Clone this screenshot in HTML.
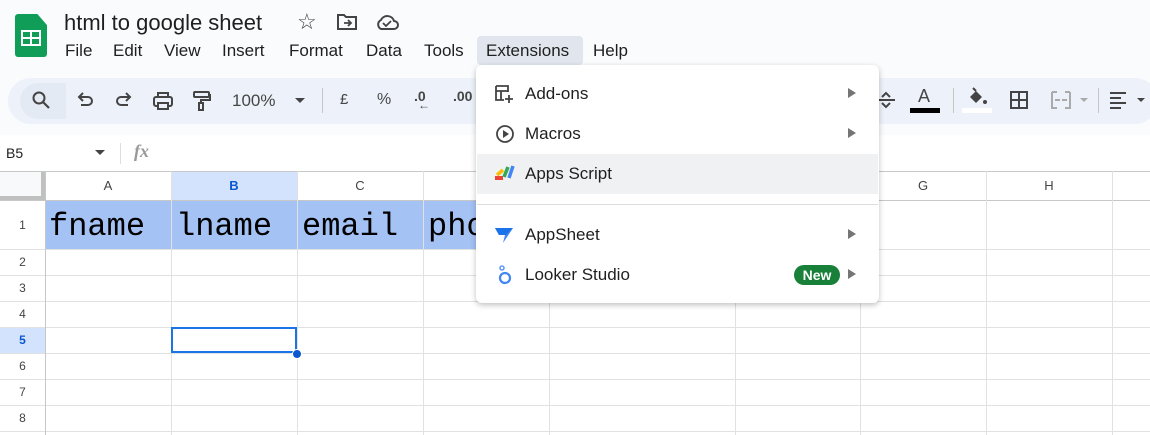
<!DOCTYPE html>
<html><head><meta charset="utf-8"><style>
*{margin:0;padding:0;box-sizing:border-box}
body{width:1150px;height:435px;overflow:hidden;background:#f9fbfd;font-family:"Liberation Sans",sans-serif;position:relative;color:#1f1f1f}
.a{position:absolute}
.menu span{position:absolute;top:41px;font-size:17px;color:#1f1f1f}
.tb{left:8px;top:78px;width:1150px;height:46px;background:#edf2fa;border-radius:24px}
.ic{position:absolute;color:#444746;font-size:17px}
.grid{left:0;top:171px;width:1150px;height:264px;background:#fff}
.vl{position:absolute;top:171px;width:1px;height:264px;background:#e1e1e1}
.hl{position:absolute;left:0;width:1150px;height:1px;background:#e1e1e1}
.ch{position:absolute;top:178px;font-size:13px;color:#444;text-align:center}
.rh{position:absolute;left:0;width:45px;text-align:center;font-size:12px;color:#444}
.mono{position:absolute;top:208px;font-family:"Liberation Mono",monospace;font-size:32px;color:#000}
.dd{left:476px;top:65px;width:403px;height:238px;background:#fff;border-radius:6px;box-shadow:0 2px 6px rgba(0,0,0,.25)}
.mi{position:absolute;left:525px;font-size:17px;color:#1f1f1f}
.arr{position:absolute;left:848px;width:0;height:0;border-top:5px solid transparent;border-bottom:5px solid transparent;border-left:8px solid #757575}
</style></head><body>
<div class="a" style="left:15px;top:14px;width:32px;height:43px;background:#0f9d58;border-radius:3px;clip-path:polygon(0 0,70% 0,100% 26%,100% 100%,0 100%)"></div>
<div class="a" style="left:21px;top:30px;width:20px;height:16px;border:2px solid #fff;background:#0f9d58"></div>
<div class="a" style="left:21px;top:37px;width:20px;height:2px;background:#fff"></div>
<div class="a" style="left:30px;top:30px;width:2px;height:16px;background:#fff"></div>
<div class="a" style="left:64px;top:10px;font-size:22px;color:#1f1f1f">html to google sheet</div>
<div class="a" style="left:297px;top:9px;font-size:22px;color:#444">☆</div>
<svg class="a" style="left:336px;top:13px" width="22" height="18" viewBox="0 0 22 18"><path d="M2 2h6l2 2h10v12H2z" fill="none" stroke="#444" stroke-width="2"/><path d="M8 10h7M12 7l3 3-3 3" stroke="#444" stroke-width="1.8" fill="none"/></svg>
<svg class="a" style="left:375px;top:13px" width="24" height="18" viewBox="0 0 24 18"><path d="M6 16h13a4 4 0 0 0 0-8 7 7 0 0 0-13-1A5 5 0 0 0 6 16z" fill="none" stroke="#444" stroke-width="2"/><path d="M8 10l3 3 5-5" stroke="#444" stroke-width="1.8" fill="none"/></svg>
<div class="menu">
<span style="left:65px">File</span><span style="left:113px">Edit</span><span style="left:164px">View</span><span style="left:222px">Insert</span><span style="left:289px">Format</span><span style="left:366px">Data</span><span style="left:424px">Tools</span>
<div class="a" style="left:477px;top:36px;width:106px;height:29px;background:#e1e6ee;border-radius:4px"></div>
<span style="left:486px">Extensions</span><span style="left:593px">Help</span>
</div>
<div class="a tb"></div>
<div class="a" style="left:20px;top:83px;width:46px;height:36px;background:#e4eaf4;border-radius:18px 0 0 18px"></div>
<svg class="a" style="left:31px;top:90px" width="20" height="20" viewBox="0 0 20 20"><circle cx="8" cy="8" r="5.5" fill="none" stroke="#444" stroke-width="2"/><path d="M12 12l6 6" stroke="#444" stroke-width="2.2"/></svg>
<svg class="a" style="left:75px;top:91px" width="20" height="20" viewBox="0 0 20 20"><path d="M5 6h8a4 4 0 0 1 0 8H6" fill="none" stroke="#444" stroke-width="2"/><path d="M8 2L4 6l4 4" fill="none" stroke="#444" stroke-width="2"/></svg>
<svg class="a" style="left:114px;top:91px" width="20" height="20" viewBox="0 0 20 20"><path d="M15 6H7a4 4 0 0 0 0 8h7" fill="none" stroke="#444" stroke-width="2"/><path d="M12 2l4 4-4 4" fill="none" stroke="#444" stroke-width="2"/></svg>
<svg class="a" style="left:152px;top:90px" width="22" height="22" viewBox="0 0 22 22"><rect x="2" y="7" width="18" height="9" rx="2" fill="none" stroke="#444" stroke-width="2"/><rect x="6" y="3" width="10" height="4" fill="none" stroke="#444" stroke-width="2"/><rect x="6" y="13" width="10" height="6" fill="#edf2fa" stroke="#444" stroke-width="2"/></svg>
<svg class="a" style="left:192px;top:90px" width="20" height="22" viewBox="0 0 20 22"><rect x="2" y="2" width="15" height="5" rx="1" fill="none" stroke="#444" stroke-width="2"/><path d="M17 5h1v5H9v3" fill="none" stroke="#444" stroke-width="2"/><rect x="7" y="13" width="4" height="7" fill="none" stroke="#444" stroke-width="2"/></svg>
<div class="ic" style="left:232px;top:91px">100%</div>
<div class="a" style="left:295px;top:98px;border-left:5px solid transparent;border-right:5px solid transparent;border-top:5px solid #444"></div>
<div class="a" style="left:322px;top:88px;width:1px;height:25px;background:#c7c7c7"></div>
<div class="ic" style="left:340px;top:91px;font-size:15px">£</div>
<div class="ic" style="left:377px;top:91px;font-size:16px">%</div>
<div class="ic" style="left:414px;top:88px;font-size:14px;font-weight:bold">.0<br><span style="position:relative;top:-8px;left:4px;font-size:12px">←</span></div>
<div class="ic" style="left:453px;top:88px;font-size:14px;font-weight:bold">.00</div>
<svg class="a" style="left:876px;top:90px" width="20" height="20" viewBox="0 0 20 20"><path d="M1 10h18" stroke="#444" stroke-width="2"/><path d="M6 7l4-4 4 4M6 13l4 4 4-4" fill="none" stroke="#444" stroke-width="2"/></svg>
<div class="ic" style="left:918px;top:86px;font-size:18px">A</div>
<div class="a" style="left:910px;top:108px;width:30px;height:5px;background:#000"></div>
<div class="a" style="left:953px;top:88px;width:1px;height:25px;background:#c7c7c7"></div>
<svg class="a" style="left:966px;top:87px" width="22" height="20" viewBox="0 0 22 20"><path d="M4 10l6-6 6 6-6 6z" fill="#444"/><path d="M7 1l3 3" stroke="#444" stroke-width="2"/><circle cx="19" cy="15" r="2" fill="#444"/></svg>
<div class="a" style="left:962px;top:108px;width:30px;height:5px;background:#fff"></div>
<svg class="a" style="left:1009px;top:90px" width="20" height="20" viewBox="0 0 20 20"><rect x="2" y="2" width="16" height="16" fill="none" stroke="#444" stroke-width="2"/><path d="M10 2v16M2 10h16" stroke="#444" stroke-width="2"/></svg>
<svg class="a" style="left:1050px;top:90px" width="22" height="20" viewBox="0 0 22 20"><path d="M2 2h5M2 2v16h5M20 2h-5M20 2v16h-5M5 10h5M17 10h-5" stroke="#aaa" stroke-width="2" fill="none"/></svg>
<div class="a" style="left:1080px;top:98px;border-left:4px solid transparent;border-right:4px solid transparent;border-top:4px solid #aaa"></div>
<div class="a" style="left:1098px;top:88px;width:1px;height:25px;background:#c7c7c7"></div>
<svg class="a" style="left:1108px;top:91px" width="20" height="18" viewBox="0 0 20 18"><path d="M2 2h16M2 7h11M2 12h16M2 17h11" stroke="#444" stroke-width="2"/></svg>
<div class="a" style="left:1137px;top:98px;border-left:4px solid transparent;border-right:4px solid transparent;border-top:4px solid #444"></div>
<div class="a" style="left:0;top:135px;width:1150px;height:36px;background:#fff"></div>
<div class="a" style="left:6px;top:145px;font-size:14px">B5</div>
<div class="a" style="left:95px;top:150px;border-left:5px solid transparent;border-right:5px solid transparent;border-top:5px solid #444"></div>
<div class="a" style="left:120px;top:143px;width:1px;height:21px;background:#ddd"></div>
<div class="a" style="left:134px;top:141px;font-size:18px;font-style:italic;color:#999;font-family:'Liberation Serif',serif;font-weight:bold">fx</div>
<div class="a grid"></div>
<div class="a" style="left:0;top:171px;width:45px;height:264px;background:#fff"></div>
<div class="a" style="left:0;top:171px;width:45px;height:29px;background:#f8f9fa;border-right:4px solid #c0c0c0;border-bottom:4px solid #c0c0c0"></div>
<div class="a" style="left:171px;top:171px;width:126px;height:29px;background:#d3e3fd"></div>
<div class="a" style="left:45px;top:200px;width:505px;height:49px;background:#a4c2f4"></div>
<div class="a" style="left:0;top:327px;width:45px;height:26px;background:#d3e3fd"></div>
<div class="hl" style="top:171px;background:#c7c7c7"></div>
<div class="hl" style="top:200px;background:#c7c7c7"></div>
<div class="hl" style="top:249px"></div><div class="hl" style="top:275px"></div><div class="hl" style="top:301px"></div><div class="hl" style="top:327px"></div><div class="hl" style="top:353px"></div><div class="hl" style="top:379px"></div><div class="hl" style="top:405px"></div><div class="hl" style="top:431px"></div>
<div class="vl" style="left:45px;background:#c7c7c7"></div><div class="vl" style="left:171px"></div><div class="vl" style="left:297px"></div><div class="vl" style="left:423px"></div><div class="vl" style="left:549px"></div><div class="vl" style="left:735px"></div><div class="vl" style="left:860px"></div><div class="vl" style="left:986px"></div><div class="vl" style="left:1112px"></div>
<div class="ch" style="left:45px;width:126px">A</div><div class="ch" style="left:171px;width:126px;color:#0b57d0;font-weight:bold">B</div><div class="ch" style="left:297px;width:126px">C</div><div class="ch" style="left:860px;width:126px">G</div><div class="ch" style="left:986px;width:126px">H</div>
<div class="rh" style="top:218px">1</div><div class="rh" style="top:255px">2</div><div class="rh" style="top:281px">3</div><div class="rh" style="top:307px">4</div><div class="rh" style="top:333px;font-weight:bold;color:#0b57d0">5</div><div class="rh" style="top:359px">6</div><div class="rh" style="top:385px">7</div><div class="rh" style="top:411px">8</div>
<div class="mono" style="left:49px">fname</div><div class="mono" style="left:176px">lname</div><div class="mono" style="left:302px">email</div><div class="mono" style="left:428px">phone</div>
<div class="a" style="left:171px;top:327px;width:126px;height:26px;border:2px solid #1a73e8"></div>
<div class="a" style="left:292px;top:349px;width:10px;height:10px;border-radius:50%;background:#0b57d0;border:1px solid #fff"></div>
<div class="a dd"></div>
<div class="a" style="left:477px;top:154px;width:401px;height:40px;background:#f0f1f2"></div>
<div class="a" style="left:477px;top:204px;width:401px;height:1px;background:#ddd"></div>
<svg class="a" style="left:494px;top:84px" width="20" height="20" viewBox="0 0 20 20"><path d="M2 2h12v6M2 2v14h8M2 7h12M7 7v9" stroke="#444" stroke-width="1.8" fill="none"/><path d="M15 11v8M11 15h8" stroke="#444" stroke-width="1.8"/></svg>
<svg class="a" style="left:495px;top:124px" width="20" height="20" viewBox="0 0 20 20"><circle cx="10" cy="10" r="8" fill="none" stroke="#444" stroke-width="1.8"/><path d="M8 6v8l6-4z" fill="#444"/></svg>
<svg class="a" style="left:493px;top:164px" width="22" height="18" viewBox="0 0 22 18"><path d="M2 14h8" stroke="#ea4335" stroke-width="4"/><path d="M4 11l6-5" stroke="#fbbc04" stroke-width="3.5"/><path d="M11 13l4-10" stroke="#34a853" stroke-width="3.5"/><path d="M16 14l4-12" stroke="#4285f4" stroke-width="3.5"/></svg>
<svg class="a" style="left:494px;top:225px" width="20" height="20" viewBox="0 0 20 20"><path d="M1 3h18L9 18l2-8H5z" fill="#4285f4"/><path d="M1 3h18L12 10H5z" fill="#1a73e8"/></svg>
<svg class="a" style="left:497px;top:264px" width="16" height="22" viewBox="0 0 16 22"><circle cx="8" cy="14" r="5" fill="none" stroke="#4285f4" stroke-width="2.2"/><circle cx="5" cy="4" r="2" fill="none" stroke="#669df6" stroke-width="1.6"/></svg>
<div class="mi" style="top:84px">Add-ons</div><div class="arr" style="top:88px"></div>
<div class="mi" style="top:124px">Macros</div><div class="arr" style="top:128px"></div>
<div class="mi" style="top:164px">Apps Script</div>
<div class="mi" style="top:225px">AppSheet</div><div class="arr" style="top:229px"></div>
<div class="mi" style="top:265px">Looker Studio</div><div class="arr" style="top:269px"></div>
<div class="a" style="left:794px;top:265px;width:46px;height:20px;background:#188038;border-radius:10px;color:#fff;font-size:14px;font-weight:bold;text-align:center;line-height:20px">New</div>
</body></html>
